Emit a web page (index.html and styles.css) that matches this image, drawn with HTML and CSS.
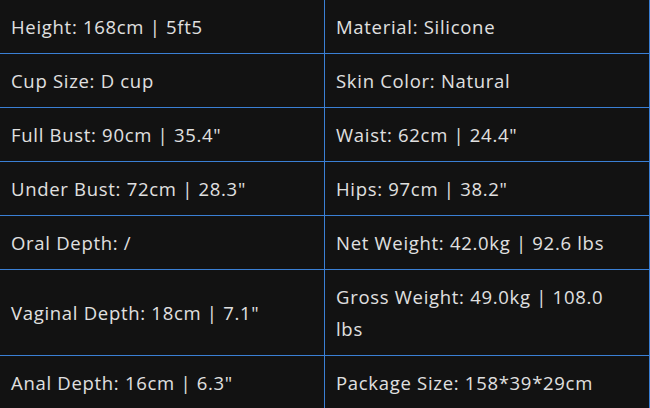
FILE: index.html
```html
<!DOCTYPE html>
<html>
<head>
<meta charset="utf-8">
<link rel="stylesheet" href="styles.css">
</head>
<body>
<div class="spec">
  <div class="cell">Height: 168cm | 5ft5</div>
  <div class="cell">Material: Silicone</div>
  <div class="cell">Cup Size: D cup</div>
  <div class="cell">Skin Color: Natural</div>
  <div class="cell">Full Bust: 90cm | 35.4"</div>
  <div class="cell">Waist: 62cm | 24.4"</div>
  <div class="cell">Under Bust: 72cm | 28.3"</div>
  <div class="cell">Hips: 97cm | 38.2"</div>
  <div class="cell">Oral Depth: /</div>
  <div class="cell">Net Weight: 42.0kg | 92.6 lbs</div>
  <div class="cell mid">Vaginal Depth: 18cm | 7.1"</div>
  <div class="cell">Gross Weight: 49.0kg | 108.0<br>lbs</div>
  <div class="cell">Anal Depth: 16cm | 6.3"</div>
  <div class="cell">Package Size: 158*39*29cm</div>
</div>
</body>
</html>
```
FILE: styles.css
```css
html, body {
  margin: 0;
  padding: 0;
  background: #121212;
}
.spec {
  display: grid;
  grid-template-columns: 325px 325px;
  width: 650px;
  font-family: "Open Sans", sans-serif;
  font-size: 18.5px;
  letter-spacing: 0.7px;
  color: #e0e0e0;
}
.cell {
  padding: 11px 11px 10px 11px;
  line-height: 32px;
  white-space: nowrap;
  border-right: 1px solid #3a7fd4;
  border-bottom: 1px solid #3a7fd4;
}
.mid {
  display: flex;
  align-items: center;
}
```
